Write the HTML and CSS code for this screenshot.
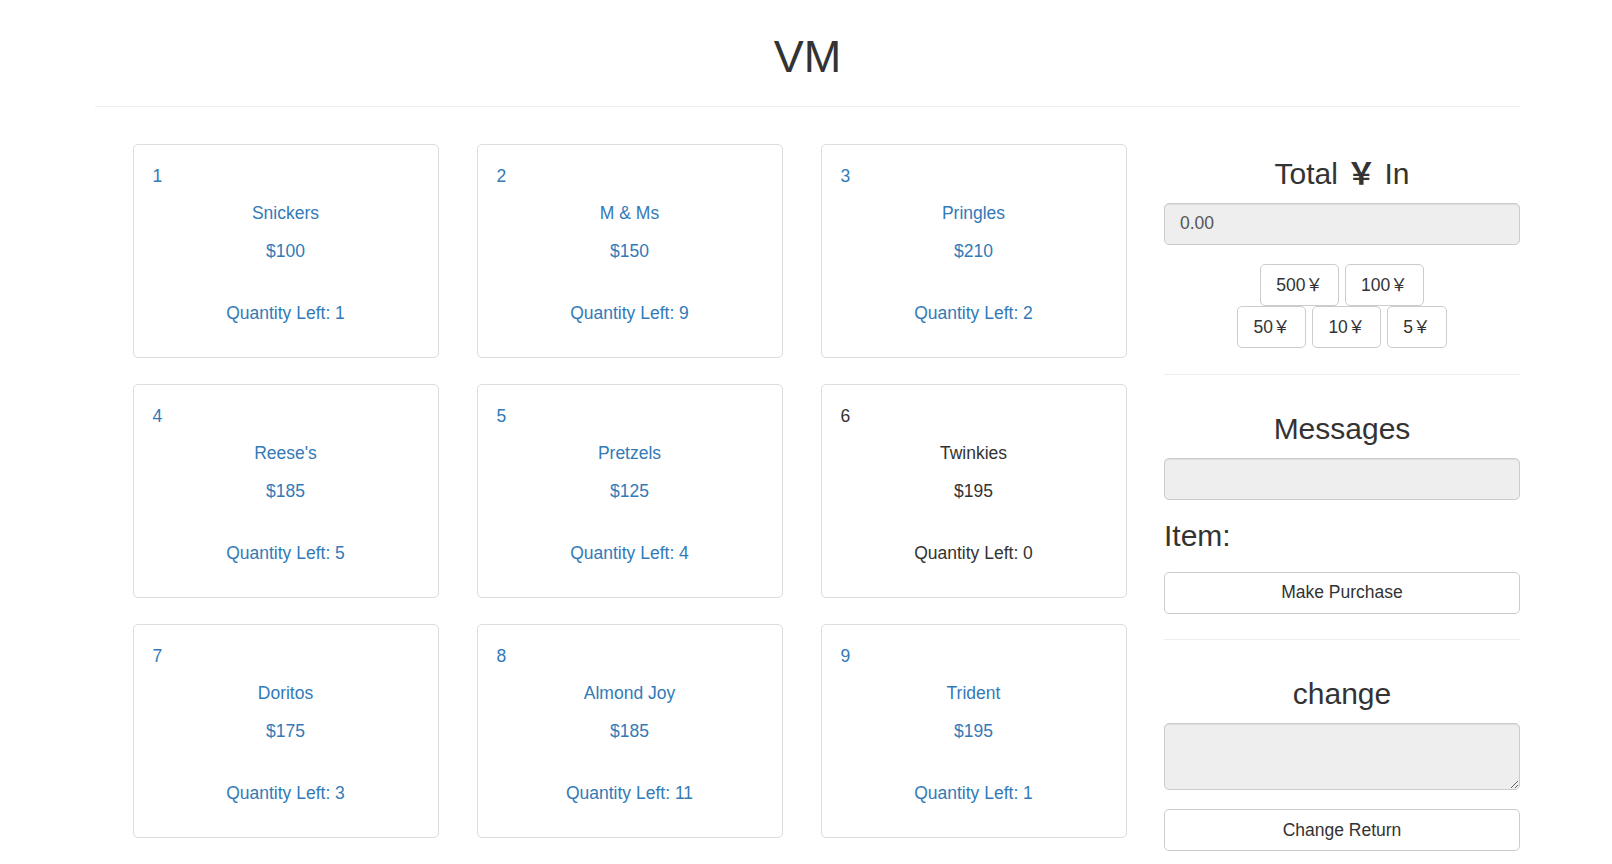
FILE: index.html
```html
<!DOCTYPE html>
<html lang="en">
<head>
<meta charset="utf-8">
<title>VM</title>
<link rel="stylesheet" href="styles.css">
</head>
<body>
<div class="container">
  <h1 class="title">VM</h1>
  <hr class="rule">
  <div class="main">
    <div class="items">
      <a class="item" href="#">
        <p class="item-id">1</p>
        <p class="item-line">Snickers</p>
        <p class="item-line">$100</p>
        <div class="spacer"></div>
        <p class="item-line">Quantity Left: 1</p>
      </a>
      <a class="item" href="#">
        <p class="item-id">2</p>
        <p class="item-line">M &amp; Ms</p>
        <p class="item-line">$150</p>
        <div class="spacer"></div>
        <p class="item-line">Quantity Left: 9</p>
      </a>
      <a class="item" href="#">
        <p class="item-id">3</p>
        <p class="item-line">Pringles</p>
        <p class="item-line">$210</p>
        <div class="spacer"></div>
        <p class="item-line">Quantity Left: 2</p>
      </a>
      <a class="item" href="#">
        <p class="item-id">4</p>
        <p class="item-line">Reese's</p>
        <p class="item-line">$185</p>
        <div class="spacer"></div>
        <p class="item-line">Quantity Left: 5</p>
      </a>
      <a class="item" href="#">
        <p class="item-id">5</p>
        <p class="item-line">Pretzels</p>
        <p class="item-line">$125</p>
        <div class="spacer"></div>
        <p class="item-line">Quantity Left: 4</p>
      </a>
      <a class="item item-empty" href="#">
        <p class="item-id">6</p>
        <p class="item-line">Twinkies</p>
        <p class="item-line">$195</p>
        <div class="spacer"></div>
        <p class="item-line">Quantity Left: 0</p>
      </a>
      <a class="item" href="#">
        <p class="item-id">7</p>
        <p class="item-line">Doritos</p>
        <p class="item-line">$175</p>
        <div class="spacer"></div>
        <p class="item-line">Quantity Left: 3</p>
      </a>
      <a class="item" href="#">
        <p class="item-id">8</p>
        <p class="item-line">Almond Joy</p>
        <p class="item-line">$185</p>
        <div class="spacer"></div>
        <p class="item-line">Quantity Left: 11</p>
      </a>
      <a class="item" href="#">
        <p class="item-id">9</p>
        <p class="item-line">Trident</p>
        <p class="item-line">$195</p>
        <div class="spacer"></div>
        <p class="item-line">Quantity Left: 1</p>
      </a>
    </div>
    <aside class="side">
      <h3 class="side-title">Total <span class="yen">￥</span> In</h3>
      <input class="field field-total" type="text" value="0.00" readonly>
      <div class="coins">
        <div class="coin-row">
          <button class="btn" type="button">500￥</button>
          <button class="btn" type="button">100￥</button>
        </div>
        <div class="coin-row">
          <button class="btn" type="button">50￥</button>
          <button class="btn" type="button">10￥</button>
          <button class="btn" type="button">5￥</button>
        </div>
      </div>
      <hr class="side-rule">
      <h3 class="side-title side-title-gap">Messages</h3>
      <input class="field" type="text" readonly>
      <h3 class="item-label">Item:</h3>
      <button class="btn btn-block btn-purchase" type="button">Make Purchase</button>
      <hr class="side-rule">
      <h3 class="side-title side-title-gap">change</h3>
      <textarea class="field field-area" rows="2" readonly></textarea>
      <button class="btn btn-block btn-return" type="button">Change Return</button>
    </aside>
  </div>
</div>
</body>
</html>
```

FILE: styles.css
```css
* {
  box-sizing: border-box;
}

html, body {
  margin: 0;
  padding: 0;
  background: #fff;
}

body {
  font-family: "Liberation Sans", "Noto Sans CJK SC", sans-serif;
  font-size: 17.5px;
  line-height: 25px;
  color: #333;
}

.container {
  width: 1425px;
  margin-left: 95px;
}

.title {
  margin: 0;
  padding-top: 32px;
  font-size: 45px;
  line-height: 49.5px;
  font-weight: 500;
  text-align: center;
  color: #333;
}

.rule {
  margin: 24.5px 0 0;
  height: 0;
  border: 0;
  border-top: 1px solid #eee;
}

.main {
  display: flex;
  align-items: flex-start;
  margin-top: 36.5px;
}

.items {
  display: grid;
  grid-template-columns: repeat(3, 306px);
  column-gap: 38px;
  row-gap: 26px;
  margin-left: 37.5px;
}

.item {
  display: block;
  border: 1px solid #ddd;
  border-radius: 5px;
  padding: 19px 19px 18px;
  color: #337ab7;
  text-decoration: none;
  background: #fff;
}

.item-empty {
  color: #333;
}

.item p {
  margin: 0 0 12.5px;
}

.item-id {
  text-align: left;
}

.item-line {
  text-align: center;
}

.spacer {
  height: 25px;
}

.side {
  width: 356px;
  margin-left: auto;
  padding-top: 13.5px;
}

.side h3 {
  margin: 0;
  font-size: 30px;
  line-height: 33px;
  font-weight: 500;
  color: #333;
}

.side-title {
  text-align: center;
}

.side-title-gap {
  margin-top: 37px !important;
}

.yen {
  font-family: "Noto Sans CJK SC", sans-serif;
  font-weight: 700;
  line-height: 0;
}

.field {
  display: block;
  width: 100%;
  height: 42px;
  margin-top: 13px;
  padding: 7.5px 15px;
  font-family: inherit;
  font-size: 17.5px;
  line-height: 25px;
  color: #555;
  background: #eee;
  border: 1px solid #ccc;
  border-radius: 5px;
  box-shadow: inset 0 1px 1px rgba(0, 0, 0, .075);
  outline: none;
}

.field-total {
  margin-top: 12.5px;
}

.field-area {
  height: 66.5px;
  resize: vertical;
}

.coins {
  margin-top: 19.5px;
}

.coin-row {
  display: flex;
  justify-content: center;
  gap: 6px;
}

.btn {
  display: inline-block;
  height: 42px;
  margin: 0;
  padding: 7.5px 15px;
  font-family: inherit;
  font-size: 17.5px;
  line-height: 25px;
  color: #333;
  background: #fff;
  border: 1px solid #ccc;
  border-radius: 5px;
  text-align: center;
  white-space: nowrap;
}

.btn-block {
  display: block;
  width: 100%;
}

.side-rule {
  margin: 25.5px 0 0;
  height: 0;
  border: 0;
  border-top: 1px solid #eee;
}

.side .item-label {
  margin-top: 19px;
  text-align: left;
}

.btn-purchase {
  margin-top: 20px;
}

.btn-return {
  margin-top: 19.5px;
}
```
